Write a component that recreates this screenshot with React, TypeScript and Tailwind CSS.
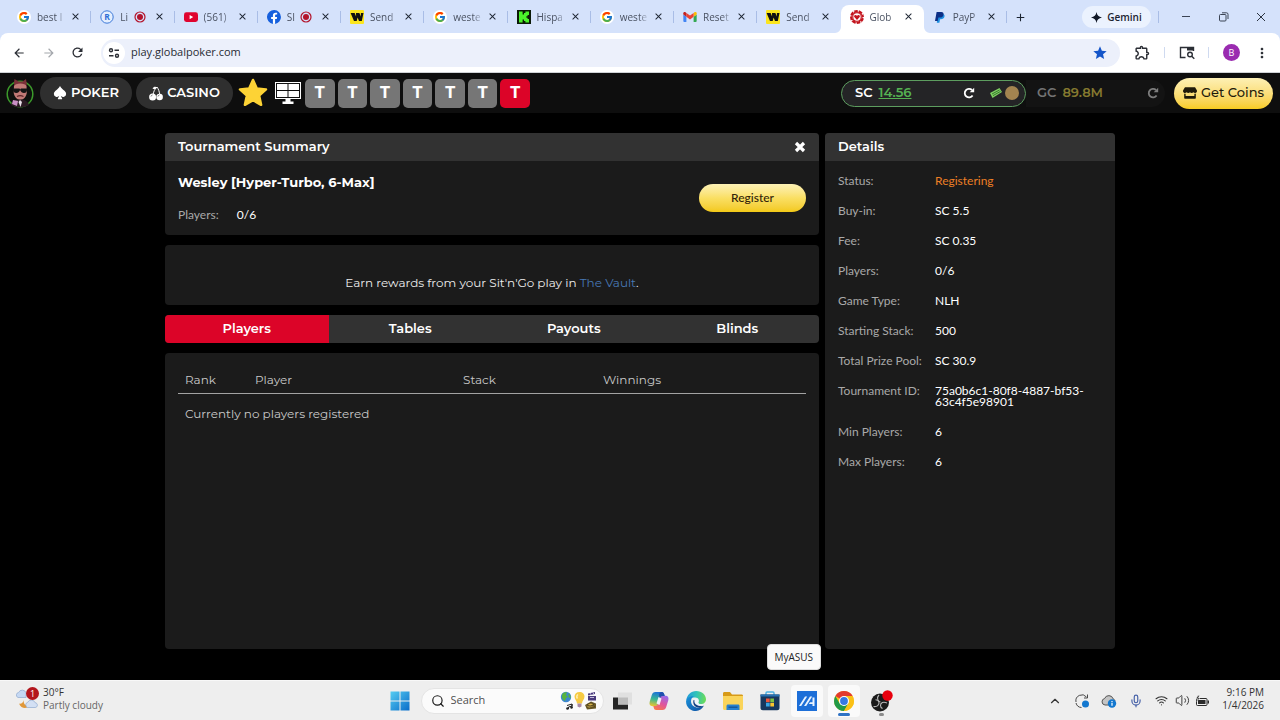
import type { ReactNode } from 'react'
import clsx from 'clsx'
import { FcGoogle } from 'react-icons/fc'
import { BsSuitSpadeFill } from 'react-icons/bs'
import { FaStore } from 'react-icons/fa'
import {
  MdAdd,
  MdArrowBack,
  MdArrowForward,
  MdClose,
  MdMoreVert,
  MdOutlineExtension,
  MdRefresh,
  MdStar,
} from 'react-icons/md'
import { ChevronUp, Mic, Search, Volume2, Wifi } from 'lucide-react'

const uiFont = "font-['Open_Sans','Noto_Sans',sans-serif]"
const brandFont = "font-['Montserrat','Inter',sans-serif]"

/* ---------- favicons ---------- */

function GoogleIcon() {
  return (
    <span className="flex size-[14px] items-center justify-center rounded-full bg-white">
      <FcGoogle size={12} />
    </span>
  )
}

function RIcon() {
  return (
    <svg viewBox="0 0 14 14" className="size-[14px]">
      <circle cx="7" cy="7" r="6.2" fill="#e4eefe" stroke="#3b78d8" />
      <text x="7" y="10" textAnchor="middle" fontSize="8.5" fontWeight="700" fill="#2f6fd6" fontFamily="Open Sans">
        R
      </text>
    </svg>
  )
}

function YouTubeIcon() {
  return (
    <svg viewBox="0 0 14 14" className="size-[14px]">
      <rect x="0" y="2.3" width="14" height="9.6" rx="2.4" fill="#e0042f" />
      <path d="M5.6 5v4.2L9.2 7.1z" fill="#fff" />
    </svg>
  )
}

function FacebookIcon() {
  return (
    <svg viewBox="0 0 24 24" className="size-[14px]">
      <circle cx="12" cy="12" r="11" fill="#fff" />
      <path
        fill="#1660dd"
        d="M24 12a12 12 0 1 0-13.9 11.9v-8.4H7.1V12h3V9.4c0-3 1.8-4.7 4.6-4.7 1.3 0 2.7.2 2.7.2v3h-1.5c-1.5 0-2 .9-2 1.9V12h3.4l-.5 3.5h-2.9v8.4A12 12 0 0 0 24 12z"
      />
    </svg>
  )
}

function WesternIcon() {
  return (
    <svg viewBox="0 0 14 14" className="size-[14px]">
      <rect width="14" height="14" rx="1" fill="#fbe51e" />
      <path d="M.6 3h4l1.5 3.600L6 3h3.400l1.400 3.600L10.900 3h2.600l-1.700 8H9L7.600 7.600 6.700 11H4z" fill="#111" />
    </svg>
  )
}

function KickIcon() {
  return (
    <svg viewBox="0 0 14 14" className="size-[14px]">
      <rect width="14" height="14" fill="#0b1a07" />
      <path d="M2 1.5h3.6v3H7V3h1.4V1.5H12V5h-1.4v1.3H9.4v1.4h1.2V9H12v3.5H8.4V11H7V9.5H5.6v3H2z" fill="#4bf32b" />
    </svg>
  )
}

function GmailIcon() {
  return (
    <svg viewBox="0 0 24 18" className="h-[10px] w-[14px]">
      <path d="M1.6 18h3.9V8.7L0 4.5v11.9C0 17.3.7 18 1.6 18z" fill="#4285f4" />
      <path d="M18.5 18h3.9c.9 0 1.6-.7 1.6-1.6V4.5l-5.5 4.2z" fill="#34a853" />
      <path d="M18.5 1.7v7L24 4.6V2.4C24 .4 21.700-.7 20.100.5z" fill="#fbbc04" />
      <path d="M5.500 8.700v-7L12 6.500l6.500-4.800v7L12 13.500z" fill="#ea4335" />
      <path d="M0 2.4v2.2l5.500 4.100v-7L3.900.5C2.300-.7 0 .4 0 2.400z" fill="#c5221f" />
    </svg>
  )
}

function GlobalPokerIcon() {
  return (
    <svg viewBox="0 0 14 14" className="size-[14px]">
      <circle cx="7" cy="7" r="5.8" fill="none" stroke="#c3141d" strokeWidth="2.4" />
      <circle cx="7" cy="7" r="6.3" fill="none" stroke="#fff" strokeWidth="1.4" strokeDasharray="1.3 3.65" />
      <circle cx="7" cy="7" r="4.7" fill="#c3141d" />
      <circle cx="7" cy="7" r="3.7" fill="#fff" />
      <path d="M7 9.900 4.300 7.100c-.9-1.500 1-3 2.700-1.300 1.700-1.700 3.600-.2 2.700 1.300z" fill="#c3141d" />
    </svg>
  )
}

function PayPalIcon() {
  return (
    <svg viewBox="0 0 14 14" className="size-[14px]">
      <path d="M5 4h4.500c1.700 0 2.300 1.200 2 2.600-.4 2-1.900 2.700-3.600 2.700H7l-.6 3.400H3.800z" fill="#1d8fe0" />
      <path d="M3.600 2h4.700c1.800 0 2.600 1.200 2.200 2.700-.4 2.100-1.800 2.900-3.500 2.900H5.400L4.700 11H2z" fill="#0c2f86" />
    </svg>
  )
}

interface BrowserTab {
  title: string
  icon: ReactNode
  recording?: boolean
  active?: boolean
}

const browserTabs: BrowserTab[] = [
  { title: 'best l', icon: <GoogleIcon /> },
  { title: 'Li', icon: <RIcon />, recording: true },
  { title: '(561)', icon: <YouTubeIcon /> },
  { title: 'SI', icon: <FacebookIcon />, recording: true },
  { title: 'Send', icon: <WesternIcon /> },
  { title: 'weste', icon: <GoogleIcon /> },
  { title: 'Hispa', icon: <KickIcon /> },
  { title: 'weste', icon: <GoogleIcon /> },
  { title: 'Reset', icon: <GmailIcon /> },
  { title: 'Send', icon: <WesternIcon /> },
  { title: 'Glob', icon: <GlobalPokerIcon />, active: true },
  { title: 'PayP', icon: <PayPalIcon /> },
]

function TabItem({ title, icon, recording, active, divider }: BrowserTab & { divider: boolean }) {
  return (
    <div
      className={clsx(
        'relative flex min-w-0 flex-1 items-center pr-[10px] pb-[5px] pl-[9px]',
        active && 'rounded-t-lg bg-white',
      )}
    >
      <span className="flex w-[14px] shrink-0 justify-center">{icon}</span>
      <span className="ml-[6px] flex-1 text-[10px] leading-4 whitespace-nowrap text-[#4a5262] [mask-image:linear-gradient(to_right,black_65%,transparent)]">
        {title}
      </span>
      {recording && (
        <svg viewBox="0 0 12 12" className="mr-1 size-3 shrink-0">
          <circle cx="6" cy="6" r="5" fill="none" stroke="#b3142b" strokeWidth="1.2" />
          <circle cx="6" cy="6" r="3" fill="#b3142b" />
        </svg>
      )}
      <button aria-label={`Close ${title}`} className="ml-1 shrink-0 text-[#1c2431]">
        <MdClose size={11} />
      </button>
      {divider && <span className="absolute top-[6px] right-0 h-3 w-px bg-[#a9bde6]" />}
      {active && (
        <>
          <svg viewBox="0 0 6 6" className="absolute bottom-0 -left-[6px] size-[6px]">
            <path d="M6 0v6H0a6 6 0 0 0 6-6z" fill="#fff" />
          </svg>
          <svg viewBox="0 0 6 6" className="absolute -right-[6px] bottom-0 size-[6px]">
            <path d="M0 0v6h6a6 6 0 0 1-6-6z" fill="#fff" />
          </svg>
        </>
      )}
    </div>
  )
}

function BrowserChrome() {
  return (
    <header className={clsx(uiFont, 'bg-[#d5e2fb]')}>
      <div className="flex h-[33px] pt-[5px]">
        <nav aria-label="Tabs" className="flex min-w-0 flex-1 pl-2">
          {browserTabs.map((tab, i) => (
            <TabItem key={i} {...tab} divider={!tab.active && !browserTabs[i + 1]?.active} />
          ))}
        </nav>
        <div className="flex w-[273px] shrink-0 items-center pb-1 pl-[7px] text-[#1c2431]">
          <button aria-label="New tab">
            <MdAdd size={13} />
          </button>
          <button className="ml-[55px] flex h-[22px] w-[69px] items-center justify-center gap-[5px] rounded-full bg-[#ebf2fe] text-[10px] font-semibold">
            <svg viewBox="0 0 12 12" className="size-[11px]">
              <path d="M6 0c.6 3.6 2.4 5.4 6 6-3.6.6-5.4 2.400-6 6-.6-3.600-2.400-5.400-6-6 3.600-.6 5.400-2.400 6-6z" fill="#111827" />
            </svg>
            Gemini
          </button>
          <span className="ml-[7px] h-3 w-px bg-[#a9bde6]" />
          <div className="flex flex-1 items-center justify-between pr-[14px] pl-[22px]">
            <button aria-label="Minimize">
              <svg viewBox="0 0 10 10" className="size-[10px]">
                <path d="M1 4.5h8" stroke="#3b4454" />
              </svg>
            </button>
            <button aria-label="Restore">
              <svg viewBox="0 0 10 10" className="size-[10px]" fill="none" stroke="#3b4454">
                <rect x=".5" y="2.5" width="6.5" height="6.5" rx="1" />
                <path d="M3 .8h4.500a1.500 1.500 0 0 1 1.500 1.500V7" />
              </svg>
            </button>
            <button aria-label="Close window">
              <svg viewBox="0 0 10 10" className="size-[10px]">
                <path d="M1 1l8 8M9 1 1 9" stroke="#2b3340" />
              </svg>
            </button>
          </div>
        </div>
      </div>

      <div className="flex h-10 items-center rounded-t-lg border-b border-[#cfd2d6] bg-white pr-[10px] pl-3 text-[#2b2e35]">
        <button aria-label="Back">
          <MdArrowBack size={14} />
        </button>
        <button aria-label="Forward" className="ml-4 text-[#a4a7ac]">
          <MdArrowForward size={14} />
        </button>
        <button aria-label="Reload" className="ml-[14px]">
          <MdRefresh size={15} />
        </button>
        <div className="ml-4 flex h-7 flex-1 items-center rounded-full bg-[#ecf0fb] pr-3 pl-[2px]">
          <button aria-label="Site information" className="flex size-[22px] items-center justify-center rounded-full bg-white">
            <svg viewBox="0 0 12 12" className="size-3" fill="none" stroke="#2b2e35" strokeWidth="1.4">
              <circle cx="3" cy="3.2" r="1.5" />
              <path d="M6.5 3.2H11M1 8.8h4.5" />
              <circle cx="9" cy="8.8" r="1.5" />
            </svg>
          </button>
          <input
            aria-label="Address"
            defaultValue="play.globalpoker.com"
            className="ml-[6px] min-w-0 flex-1 bg-transparent text-[11px] text-[#282c34] outline-none"
          />
          <button aria-label="Bookmark" className="text-[#1455c9]">
            <MdStar size={16} />
          </button>
        </div>
        <button aria-label="Extensions" className="ml-[14px]">
          <MdOutlineExtension size={17} />
        </button>
        <span className="ml-[13px] h-[11px] w-px bg-[#cfdaf0]" />
        <button aria-label="Tab search" className="ml-[14px]">
          <svg viewBox="0 0 16 14" className="h-[14px] w-4" fill="none" stroke="#2b2e35" strokeWidth="1.4">
            <path d="M6.5 11.5h-5v-10h13V5" />
            <path d="M8 3h6.500" strokeWidth="3" />
            <circle cx="11" cy="8.5" r="2.3" />
            <path d="m12.700 10.200 2.600 2.600" />
          </svg>
        </button>
        <span className="ml-[13px] h-[11px] w-px bg-[#cfdaf0]" />
        <button
          aria-label="Profile"
          className="ml-[14px] flex size-[17px] items-center justify-center rounded-full bg-[#9a2bb0] text-[9px] text-white"
        >
          B
        </button>
        <button aria-label="Menu" className="ml-[14px]">
          <MdMoreVert size={16} />
        </button>
      </div>
    </header>
  )
}

/* ---------- game header ---------- */

function Avatar() {
  return (
    <svg viewBox="0 0 28 30" className="h-[30px] w-7">
      <circle cx="14" cy="16" r="12.8" fill="#0d100d" stroke="#3c9a2b" strokeWidth="1.5" />
      <path d="M8 5 8.500 1l4 2.500h4L20 1l.8 5-.8 3H8.500z" fill="#7a3038" />
      <path d="M8 8c1-3.500 11.500-3.500 12.500 0l.3 6c0 4-3 8-6.500 8S7.700 18 7.700 14z" fill="#c17a76" />
      <path d="M7 10.500h6.500l.7 1 .7-1H21c.3 3-1 4.500-3 4.500s-3-1-3.500-2.500h-.8C13.200 14 12.200 15 10.300 15S6.700 13.500 7 10.500z" fill="#141414" />
      <path d="M11 18.500c2-1 4.500-1 6.500 0" stroke="#5e2529" strokeWidth="1.2" fill="none" />
      <path d="M5 27c1-4 4-5.500 9-5.500s8 2 9 5.500c-5 3-13 3-18 0z" fill="#2a1a22" />
      <path d="m7 22 5 1-1 5-5-2z" fill="#c98fc4" />
      <path d="m14 22 2 2-1.500 5-2-5z" fill="#e9dfe8" />
    </svg>
  )
}

function Cherries() {
  return (
    <svg viewBox="0 0 14 15" className="h-[15px] w-[14px]">
      <path d="M4 9C4.500 6 5.500 3 8 1c1.500 2 2.500 5 2.800 8" stroke="#fff" fill="none" />
      <path d="M8 1.500C6.500.2 4.500.8 3.500 2.500 5.500 3.500 7 3 8 1.500z" fill="#fff" />
      <circle cx="3.6" cy="11" r="3.5" fill="#fff" />
      <circle cx="10.6" cy="11" r="3.3" fill="#fff" />
      <path d="M2 10.500a1.800 1.800 0 0 1 1.500-1.500M9 10.500A1.800 1.800 0 0 1 10.500 9" stroke="#333" strokeWidth=".6" fill="none" />
    </svg>
  )
}

function MonitorIcon() {
  return (
    <svg viewBox="0 0 28 22" className="h-[22px] w-7">
      <rect x="1" y="0" width="26" height="17" fill="#fff" />
      <rect x="2" y="1" width="24" height="15" fill="#111" />
      <path d="M3 2h10.500v6H3zM14.500 2H25v6H14.500zM3 9h10.500v6H3zM14.500 9H25v6H14.500z" fill="#fff" />
      <path d="M11.500 17h5v2.500h3V22h-11v-2.500h3z" fill="#fff" />
    </svg>
  )
}

function ReloadGlyph() {
  return (
    <svg viewBox="0 0 12 12" className="size-3" fill="none" stroke="currentColor" strokeWidth="1.8">
      <path d="M9.600 8.600A4.300 4.300 0 1 1 9 3" />
      <path d="M11.200.8v4.500H6.700z" fill="currentColor" stroke="none" />
    </svg>
  )
}

function GameHeader() {
  return (
    <div className={clsx(brandFont, 'flex h-10 items-center justify-between bg-[#0e0e0e] pr-[7px] pl-[6px]')}>
      <div className="flex items-center">
        <Avatar />
        <button className="ml-[6px] flex h-8 w-[92px] items-center justify-center gap-1 rounded-full bg-[#2f2f2f] text-[13px] font-semibold text-white">
          <BsSuitSpadeFill size={14} />
          POKER
        </button>
        <button className="ml-1 flex h-8 w-[97px] items-center justify-center gap-1 rounded-full bg-[#2f2f2f] text-[13px] font-semibold text-white">
          <Cherries />
          CASINO
        </button>
        <button aria-label="Favourites" className="ml-[5px]">
          <svg viewBox="0 0 30 30" className="size-[30px]">
            <path
              d="m15 2 3.800 8.400 9.200 1-6.900 6.200 2 9.200-8.100-4.700-8.100 4.700 2-9.200L2 11.400l9.200-1z"
              fill="#fdd335"
              stroke="#fdd335"
              strokeWidth="2.5"
              strokeLinejoin="round"
            />
          </svg>
        </button>
        <button aria-label="Table view" className="ml-[6px]">
          <MonitorIcon />
        </button>
        <div className="ml-[3px] flex w-[225px] gap-[3px]">
          {[0, 1, 2, 3, 4, 5, 6].map((n) => (
            <button
              key={n}
              className={clsx(
                'h-[29px] flex-1 rounded-[5px] text-[16px] font-bold text-white',
                n === 6 ? 'bg-[#dc0428]' : 'bg-[#767676]',
              )}
            >
              T
            </button>
          ))}
        </div>
      </div>

      <div className="flex items-center">
        <div className="flex h-[27px] w-[185px] items-center rounded-full border border-[#5d9d5f] bg-[#242426] pr-[6px] pl-[13px] text-[13px] font-semibold">
          <span className="text-white">SC</span>
          <a href="#balance" className="ml-[6px] text-[#55b252] underline">
            14.56
          </a>
          <button aria-label="Refresh SC" className="ml-auto text-white">
            <ReloadGlyph />
          </button>
          <svg viewBox="0 0 14 12" className="ml-[14px] h-3 w-[14px]">
            <path d="M1 6 10.500 1l2.500 4-9.500 6z" fill="#7fce62" />
            <path d="m3 7 7.500-4M4 8.600l7.500-4.200" stroke="#2f6b27" strokeWidth=".9" />
          </svg>
          <span className="ml-[2px] size-[14px] rounded-full bg-[#a38450]" />
        </div>
        <div className="flex h-[27px] w-[139px] items-center rounded-r-full bg-[#131313] pr-[6px] pl-[11px] text-[13px] font-semibold">
          <span className="text-[#737373]">GC</span>
          <span className="ml-[6px] text-[#85792f]">89.8M</span>
          <button aria-label="Refresh GC" className="ml-auto text-[#7d7d7d]">
            <ReloadGlyph />
          </button>
        </div>
        <button className="ml-[9px] flex h-[31px] w-[99px] items-center justify-center gap-1 rounded-full bg-linear-to-b from-[#fdf0b4] to-[#f8cc1c] text-[13px] font-medium whitespace-nowrap text-[#1f1a0a]">
          <FaStore size={14} />
          Get Coins
        </button>
      </div>
    </div>
  )
}

/* ---------- tournament lobby ---------- */

const details = [
  ['Status:', 'Registering'],
  ['Buy-in:', 'SC 5.5'],
  ['Fee:', 'SC 0.35'],
  ['Players:', '0/6'],
  ['Game Type:', 'NLH'],
  ['Starting Stack:', '500'],
  ['Total Prize Pool:', 'SC 30.9'],
  ['Tournament ID:', '75a0b6c1-80f8-4887-bf53-63c4f5e98901'],
  ['Min Players:', '6'],
  ['Max Players:', '6'],
]

const lobbyTabs = ['Players', 'Tables', 'Payouts', 'Blinds']

function PanelTitle({ children }: { children: ReactNode }) {
  return (
    <div
      className={clsx(
        brandFont,
        'flex h-7 items-center justify-between rounded-t bg-[#323232] px-[13px] text-[13px] font-semibold text-white',
      )}
    >
      {children}
    </div>
  )
}

function Lobby() {
  return (
    <main className="mx-auto grid w-full max-w-[950px] flex-1 grid-cols-[654fr_290fr] gap-[6px] pt-5 pb-[31px]">
      <div className="flex flex-col gap-[10px]">
        <section className="rounded bg-[#1b1b1b]">
          <PanelTitle>
            <h1>Tournament Summary</h1>
            <button aria-label="Close">
              <svg viewBox="0 0 12 12" className="size-3">
                <path d="m2 2 8 8m0-8-8 8" stroke="#fff" strokeWidth="3.2" />
              </svg>
            </button>
          </PanelTitle>
          <div className="flex h-[74px] items-center justify-between px-[13px]">
            <div>
              <h2 className={clsx(brandFont, 'text-[13px] leading-4 font-bold text-white')}>
                Wesley [Hyper-Turbo, 6-Max]
              </h2>
              <p className="mt-[17px] font-[Lato,sans-serif] text-[12px] leading-4 text-[#a9a9a9]">
                Players: <span className="ml-[15px] text-white">0/6</span>
              </p>
            </div>
            <button className="h-7 w-[107px] rounded-full bg-linear-to-b from-[#fdf1b5] via-[#fadf62] to-[#f3c912] font-[Lato,sans-serif] text-[12px] font-medium text-[#33240a]">
              Register
            </button>
          </div>
        </section>

        <section
          className={clsx(
            brandFont,
            'flex h-[60px] items-center justify-center rounded bg-[#1b1b1b] pt-4 text-[12px] text-[#ececec]',
          )}
        >
          <p>
            Earn rewards from your Sit'n'Go play in{' '}
            <a href="#vault" className="text-[#4878b4]">
              The Vault
            </a>
            .
          </p>
        </section>

        <div
          role="tablist"
          className={clsx(brandFont, 'grid h-7 grid-cols-4 overflow-hidden rounded bg-[#323232] text-[13px] font-semibold text-white')}
        >
          {lobbyTabs.map((tab, i) => (
            <button key={tab} role="tab" aria-selected={i === 0} className={clsx(i === 0 && 'bg-[#dc0428]')}>
              {tab}
            </button>
          ))}
        </div>

        <section className={clsx(brandFont, 'flex-1 rounded bg-[#1b1b1b] px-[13px] pt-[14px]')}>
          <table className="w-full table-fixed text-left text-[12px] text-[#c9c9c9]">
            <thead>
              <tr className="h-[26px] border-b border-[#a3a3a3]">
                <th className="w-[70px] pl-[7px] font-normal">Rank</th>
                <th className="w-[208px] pl-[7px] font-normal">Player</th>
                <th className="w-[140px] pl-[7px] font-normal">Stack</th>
                <th className="pl-[7px] font-normal">Winnings</th>
              </tr>
            </thead>
            <tbody>
              <tr className="h-[42px]">
                <td colSpan={4} className="pl-[7px]">
                  Currently no players registered
                </td>
              </tr>
            </tbody>
          </table>
        </section>
      </div>

      <aside className="rounded bg-[#1b1b1b]">
        <PanelTitle>
          <h2>Details</h2>
        </PanelTitle>
        <dl className="grid grid-cols-[97px_1fr] gap-y-[19px] pt-[14px] pr-6 pl-[13px] font-[Lato,sans-serif] text-[12px] leading-[11px]">
          {details.map(([label, value]) => (
            <div key={label} className="contents">
              <dt className="whitespace-nowrap text-[#a9a9a9]">{label}</dt>
              <dd className={clsx('break-words', value === 'Registering' ? 'text-[#ec7f25]' : 'text-white')}>{value}</dd>
            </div>
          ))}
        </dl>
      </aside>
    </main>
  )
}

/* ---------- taskbar ---------- */

function WeatherIcon() {
  return (
    <svg viewBox="0 0 24 24" className="size-6">
      <path d="M2 10.500a2.600 2.600 0 0 1 .6-5 4 4 0 0 1 7.500.5V10.500z" fill="#c5d8f3" stroke="#8fa9cf" strokeWidth=".7" />
      <path d="M8 13c-1 3.500 1 5.500 5 6-2 3-8 3-10-2.500 2 .8 4-.5 5-3.500z" fill="#e0983a" />
      <path d="M11.500 20.500a2.800 2.800 0 0 1 .3-5.300 4 4 0 0 1 7.300.5c3 .2 3 4.800 0 4.800z" fill="#d3e0f4" stroke="#8fa9cf" strokeWidth=".7" />
      <circle cx="16.5" cy="6.5" r="6.5" fill="#b3161d" />
      <text x="16.5" y="10" textAnchor="middle" fontSize="9" fill="#fff" fontFamily="Open Sans">
        1
      </text>
    </svg>
  )
}

function WindowsLogo() {
  return (
    <svg viewBox="0 0 20 20" className="size-5">
      <defs>
        <linearGradient id="win" x1="0" y1="0" x2="1" y2="1">
          <stop offset="0" stopColor="#55cdf2" />
          <stop offset="1" stopColor="#0a6cc9" />
        </linearGradient>
      </defs>
      <path d="M.5.5h9v9h-9zm10 0h9v9h-9zm-10 10h9v9h-9zm10 0h9v9h-9z" fill="url(#win)" />
    </svg>
  )
}

function SearchDoodle() {
  return (
    <svg viewBox="0 0 38 20" className="h-5 w-[38px]">
      <circle cx="6" cy="6" r="5.2" fill="#3d86cf" />
      <path d="M2 4c1-3 4-3 5-2.500L6 4l2 2-2 1-1 3C3 9 1.500 7 2 4zM8.500 2.500c2 1 2.500 3 2 5L8.500 6z" fill="#57b33f" />
      <path d="M7 14.500 12 13v2l-3.500 1V18M12 13v4" stroke="#222" fill="none" />
      <circle cx="7.5" cy="17.5" r="1.3" fill="#222" />
      <circle cx="11.5" cy="16.5" r="1.2" fill="#222" />
      <path d="M19.500 1c3 0 5 2 5 4.500 0 3-2.300 4-2.500 7h-5c-.2-3-2.500-4-2.500-7C14.500 3 16.500 1 19.500 1z" fill="#f6ca43" />
      <path d="M18 3.500c-1.500 1-1.500 3-.5 4" stroke="#fff1b8" strokeWidth="1.5" fill="none" />
      <path d="M17.500 12.500h4v3l-2 1-2-1z" fill="#a889a5" />
      <path d="M28 2.500 35 1v2l-7 1.500zM28 5h8v4.500h-8z" fill="#4a3b7c" />
      <path d="m30 2 1 1.800M33 1.500l1 1.800M30 6.500h4" stroke="#dcd5ef" strokeWidth=".8" />
      <path d="M25 14 31 10.500l5 2v5L27 18.500z" fill="#6b5a28" />
      <path d="m27 13.500 4-1.500 3 1.500-4 1.500zM26 15.500l3 1.500 6-1.500" fill="#d8b44a" stroke="#382f16" strokeWidth=".6" />
    </svg>
  )
}

function TaskViewIcon() {
  return (
    <svg viewBox="0 0 20 20" className="size-5">
      <path d="M1 6.500h15v12H1z" fill="#262626" />
      <path d="M6 1.500h14v12H6z" fill="#e0e0e0" />
      <path d="M6 6.500h10v7H6z" fill="#bcbcbc" />
    </svg>
  )
}

function CopilotIcon() {
  return (
    <svg viewBox="0 0 20 20" className="size-5">
      <defs>
        <linearGradient id="cpl" x1=".4" y1="0" x2=".2" y2="1">
          <stop offset="0" stopColor="#1c72d8" />
          <stop offset=".5" stopColor="#38b892" />
          <stop offset="1" stopColor="#f2c52a" />
        </linearGradient>
        <linearGradient id="cpr" x1=".7" y1="0" x2=".2" y2="1">
          <stop offset="0" stopColor="#9b6ae8" />
          <stop offset=".5" stopColor="#e0559d" />
          <stop offset="1" stopColor="#fa7a45" />
        </linearGradient>
      </defs>
      <path d="M6.500 1h6.300c1.500 0 2 1 2.400 2.300l.5 1.700h-2c-1.500 0-2.200.8-2.600 2.200L9.300 13c-.5 1.500-1.300 2.200-3 2.200H3.500C1 15.200 0 13.300.7 10.800L2.800 4C3.400 2 4.500 1 6.500 1z" fill="url(#cpl)" />
      <path d="M13.500 19H7.200c-1.500 0-2-1-2.400-2.300L4.300 15h2c1.500 0 2.200-.8 2.600-2.200L10.700 7c.5-1.500 1.300-2.200 3-2.200h2.800c2.500 0 3.500 1.900 2.800 4.400L17.200 16c-.6 2-1.700 3-3.700 3z" fill="url(#cpr)" />
      <path d="m9.500 6-2 6.500L10.500 14l2-6.500z" fill="#eef1f7" />
      <path d="M12.800 1c1.500 0 2 1 2.400 2.300l.5 1.700h-2c-1.400 0-2.200.8-2.600 2L10 4.500C10.300 2 11 1 12.800 1z" fill="#214fae" />
    </svg>
  )
}

function EdgeIcon() {
  return (
    <svg viewBox="0 0 20 20" className="size-5">
      <defs>
        <linearGradient id="edTop" x1="0" y1=".3" x2="1" y2=".4">
          <stop offset="0" stopColor="#2299dc" />
          <stop offset=".5" stopColor="#31c3b9" />
          <stop offset="1" stopColor="#6bdc58" />
        </linearGradient>
        <linearGradient id="edBot" x1="0" y1="0" x2="1" y2="1">
          <stop offset="0" stopColor="#1a93dc" />
          <stop offset="1" stopColor="#0f4fa0" />
        </linearGradient>
      </defs>
      <path d="M.2 9.500C.8 4 5 0 10.200 0 16 0 20 4 20 8.200c0 3-2.200 4.900-5 4.900-2 0-3.300-.8-2.700-1.600 1.500-2 .2-5-3-5C5.500 6.500 1.500 7.500.2 9.500z" fill="url(#edTop)" />
      <path d="M.1 10C.6 6.500 4.500 5 8 5.200c-2 .9-3 2.800-3 5 0 4.500 4.500 7.300 9.500 6 1.300-.3 2.300-.8 3.300-1.400C16 18 13.500 20 10 20 4.500 20-.3 15.500.1 10z" fill="url(#edBot)" />
      <path d="M7.600 9c-1.200 3.500.8 7.200 5 7.600 2.300.2 4-.8 5.200-1.800-1.500.5-3 .5-4.500 0-3-1-4-3-3.700-5.300z" fill="#113f83" />
      <path d="M8.800 8.600c-1.300 2.200.2 5.800 4.500 6.200 2.400.2 4-.8 5-2-2.500 1-6.600.5-6-1.300C13.200 9 10.800 7 8.800 8.600z" fill="#eef6fb" />
    </svg>
  )
}

function FolderIcon() {
  return (
    <svg viewBox="0 0 20 20" className="size-5">
      <path d="M0 2.500C0 1.700.5 1 1.500 1H7l2 2.500h9.500c1 0 1.500.5 1.500 1.500v4H0z" fill="#d79a18" />
      <path d="M0 5h20v12.500c0 .8-.5 1.500-1.500 1.500h-17C.5 19 0 18.300 0 17.500z" fill="#fad45a" />
      <path d="M3.500 19v-4c0-.8.5-1.500 1.500-1.500h10c1 0 1.500.7 1.500 1.500v4z" fill="#2780cf" />
      <path d="M5.500 16.200h9" stroke="#14508e" strokeWidth="1.2" />
    </svg>
  )
}

function StoreIcon() {
  return (
    <svg viewBox="0 0 20 20" className="size-5">
      <path d="M6 4V2c0-.6.4-1 1-1h6c.6 0 1 .4 1 1v2" stroke="#49b0e4" strokeWidth="1.4" fill="none" />
      <path d="M.5 3.500h19V17c0 1.300-1 2.300-2.300 2.300H2.800C1.500 19.300.5 18.300.5 17z" fill="#17375e" />
      <path d="M.5 3.500h19v2H.5z" fill="#2772b3" />
      <path d="M6 7.500h3.700v3.700H6z" fill="#f0553a" />
      <path d="M10.300 7.500H14v3.700h-3.700z" fill="#80c142" />
      <path d="M6 11.800h3.700v3.700H6z" fill="#37a6e6" />
      <path d="M10.300 11.800H14v3.700h-3.700z" fill="#fbc52f" />
    </svg>
  )
}

function AsusIcon() {
  return (
    <svg viewBox="0 0 20 20" className="size-5">
      <path d="M0 0h20v20H0z" fill="#1d6fd8" />
      <path d="M2 15 8 5.500h2.200L4.200 15zM7 15l6-9.500h2.200L9.200 15zM15.500 6.500h2V15h-2v-2h-3.700l1.200-1.800h2.500z" fill="#e8f3ff" />
    </svg>
  )
}

function ChromeIcon() {
  return (
    <svg viewBox="0 0 20 20" className="size-5">
      <circle cx="10" cy="10" r="10" fill="#fbc116" />
      <path d="M10 10 1.340 5A10 10 0 0 1 18.660 5z" fill="#e33b2e" />
      <path d="M1.340 5A10 10 0 0 0 10 20l4.330-7.500L10 10 5.670 12.500z" fill="#229a48" />
      <path d="M10 5h8.660A10 10 0 0 1 10 20l4.330-7.500z" fill="#fbc116" />
      <circle cx="10" cy="10" r="5" fill="#fff" />
      <circle cx="10" cy="10" r="3.9" fill="#3579e2" />
    </svg>
  )
}

function ObsIcon() {
  return (
    <svg viewBox="0 0 24 22" className="h-[22px] w-6">
      <circle cx="11" cy="12.5" r="9" fill="#1b1b1b" />
      <g fill="none" stroke="#b9b9b9" strokeWidth="1.1">
        <path d="M10 5c-2.500 2.500-1.500 6.500 1.500 7" />
        <path d="M18 13c-3.500-1.500-6.500-.5-6.500 2.500 0 1.500 1 2.500 2 3" />
        <path d="M4.500 16.500c3.500.5 6-1.500 5.500-4.500-.5-1.500-2-2.300-3.500-2.300" />
      </g>
      <circle cx="18.5" cy="5.5" r="5.2" fill="#e8000d" />
    </svg>
  )
}

const apps: { name: string; icon: ReactNode; tooltip?: boolean; open?: boolean; idle?: boolean }[] = [
  { name: 'Task View', icon: <TaskViewIcon /> },
  { name: 'Copilot', icon: <CopilotIcon /> },
  { name: 'Edge', icon: <EdgeIcon /> },
  { name: 'File Explorer', icon: <FolderIcon /> },
  { name: 'Store', icon: <StoreIcon /> },
  { name: 'MyASUS', icon: <AsusIcon />, tooltip: true },
  { name: 'Chrome', icon: <ChromeIcon />, open: true },
  { name: 'OBS', icon: <ObsIcon />, idle: true },
]

function Taskbar() {
  return (
    <footer
      className={clsx(uiFont, 'grid h-10 grid-cols-[1fr_auto_1fr] items-center border-t border-[#f8f8f8] bg-[#eeeeee] text-[#333]')}
    >
      <div className="flex items-center gap-[3px] pb-[3px] pl-4">
        <WeatherIcon />
        <div className="text-[10px] leading-[13px]">
          <p>30°F</p>
          <p className="text-[#666]">Partly cloudy</p>
        </div>
      </div>

      <div className="flex h-full items-center pl-[9px]">
        <button aria-label="Start">
          <WindowsLogo />
        </button>
        <label className="ml-[11px] flex h-[26px] w-[183px] items-center rounded-full border border-[#e4e4e4] bg-[#fbfbfb] pr-[5px] pl-[9px]">
          <Search size={14} color="#1a1a1a" />
          <input
            aria-label="Search"
            placeholder="Search"
            className="ml-[6px] min-w-0 flex-1 bg-transparent text-[11px] outline-none placeholder:text-[#505050]"
          />
          <SearchDoodle />
        </label>
        <div className="flex h-full w-[296px]">
          {apps.map(({ name, icon, tooltip, open, idle }) => (
            <button key={name} aria-label={name} className="relative flex flex-1 items-center justify-center">
              <span
                className={clsx(
                  'flex size-8 items-center justify-center rounded',
                  (tooltip || open) && 'bg-[#fafafa]',
                )}
              >
                {icon}
              </span>
              {open && <span className="absolute bottom-1 h-[3px] w-3 rounded-full bg-[#2f72c4]" />}
              {idle && <span className="absolute bottom-1 h-[3px] w-[5px] rounded-full bg-[#8b8b8b]" />}
              {tooltip && (
                <span
                  role="tooltip"
                  className="absolute bottom-[50px] -left-[22px] rounded border border-[#dcdcdc] bg-[#fafafa] px-[7px] py-1 text-[10px] leading-4 text-[#222]"
                >
                  MyASUS
                </span>
              )}
            </button>
          ))}
        </div>
      </div>

      <div className="flex items-center justify-end pr-4">
        <ChevronUp size={14} strokeWidth={2} />
        <svg viewBox="0 0 16 16" className="ml-3 size-4" fill="none" stroke="#4a4a4a">
          <path d="M2 9a6 6 0 0 1 10.500-5M13.500 1.500v3.500H10M7.500 14.500A6 6 0 0 1 2 10" />
          <circle cx="11.5" cy="11" r="3.5" fill="#1277cf" stroke="none" />
        </svg>
        <svg viewBox="0 0 16 16" className="ml-[11px] size-4">
          <path d="M4 12a3.300 3.300 0 0 1-.4-6.500 4.500 4.500 0 0 1 8.500.3A3 3 0 0 1 14 8L8 12z" fill="#c4c4c4" stroke="#555" />
          <circle cx="11" cy="10.5" r="4.2" fill="#1277cf" />
          <path d="M11 8v1M11 9.800v3" stroke="#fff" strokeWidth="1.2" />
        </svg>
        <Mic size={14} color="#4661a8" className="ml-3" />
        <Wifi size={13} className="ml-3" />
        <Volume2 size={15} strokeWidth={1.5} className="ml-[7px]" />
        <svg viewBox="0 0 16 12" className="ml-1 h-3 w-4">
          <rect x="2.5" y="3.5" width="10.5" height="7" rx="1" fill="none" stroke="#2b2b2b" />
          <path d="M4 5h7.500v4H4z" fill="#2b2b2b" />
          <path d="M14.300 5.500v3" stroke="#2b2b2b" strokeWidth="1.4" />
          <path d="M4 .5 2.200 3.500h1.600L2.800 6.500 6 3H4.300L5.500.5z" fill="#2b2b2b" stroke="#eee" strokeWidth=".4" />
        </svg>
        <div className="ml-3 pb-[3px] text-right text-[10px] leading-[13px]">
          <p>9:16 PM</p>
          <p>1/4/2026</p>
        </div>
      </div>
    </footer>
  )
}

export default function App() {
  return (
    <div className="flex min-h-screen flex-col bg-black">
      <BrowserChrome />
      <GameHeader />
      <Lobby />
      <Taskbar />
    </div>
  )
}
